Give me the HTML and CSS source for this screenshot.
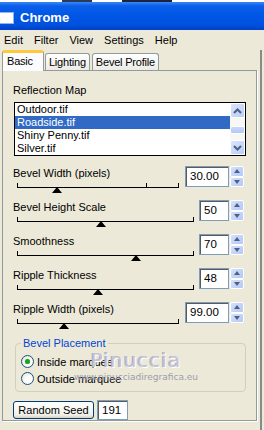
FILE: index.html
```html
<!DOCTYPE html>
<html lang="en">
<head>
  <meta charset="UTF-8" />
  <title>Chrome</title>
  <link rel="stylesheet" href="styles.css">
</head>
<body>
  <div class="topstrip"></div>
  <div class="titlebar">
    <span class="title-icon"></span>
    <span class="title-text">Chrome</span>
  </div>
  <div class="menubar">
    <span>Edit</span>
    <span>Filter</span>
    <span>View</span>
    <span>Settings</span>
    <span>Help</span>
  </div>

  <div class="frame">
    <div class="tabs">
      <span class="tab active">Basic</span>
      <span class="tab">Lighting</span>
      <span class="tab">Bevel Profile</span>
    </div>

    <div class="page">
      <div class="label">Reflection Map</div>
      <div class="listbox">
        <ul class="items">
          <li>Outdoor.tif</li>
          <li class="selected">Roadside.tif</li>
          <li>Shiny Penny.tif</li>
          <li>Silver.tif</li>
        </ul>
        <div class="scrollbar">
          <span class="sbtn">
            <svg width="9" height="6" viewBox="0 0 9 6"><path d="M1 5 L4.5 1.5 L8 5" fill="none" stroke="#4d6185" stroke-width="2"/></svg>
          </span>
          <span class="sthumb"></span>
          <span class="sbtn">
            <svg width="9" height="6" viewBox="0 0 9 6"><path d="M1 1 L4.5 4.5 L8 1" fill="none" stroke="#4d6185" stroke-width="2"/></svg>
          </span>
        </div>
      </div>

      <div class="row">
        <div class="slider-col">
          <div class="label">Bevel Width (pixels)</div>
          <div class="track wide">
            <span class="tick" style="left: 128px"></span>
            <span class="thumb" style="left: 39px"></span>
          </div>
        </div>
        <div class="field dec">30.00</div>
        <div class="spin"><span class="up"></span><span class="down"></span></div>
      </div>

      <div class="row">
        <div class="slider-col">
          <div class="label">Bevel Height Scale</div>
          <div class="track">
            <span class="thumb" style="left: 83px"></span>
          </div>
        </div>
        <div class="field">50</div>
        <div class="spin"><span class="up"></span><span class="down"></span></div>
      </div>

      <div class="row">
        <div class="slider-col">
          <div class="label">Smoothness</div>
          <div class="track">
            <span class="thumb" style="left: 118px"></span>
          </div>
        </div>
        <div class="field">70</div>
        <div class="spin"><span class="up"></span><span class="down"></span></div>
      </div>

      <div class="row">
        <div class="slider-col">
          <div class="label">Ripple Thickness</div>
          <div class="track">
            <span class="thumb" style="left: 80px"></span>
          </div>
        </div>
        <div class="field">48</div>
        <div class="spin"><span class="up"></span><span class="down"></span></div>
      </div>

      <div class="row">
        <div class="slider-col">
          <div class="label">Ripple Width (pixels)</div>
          <div class="track wide">
            <span class="thumb" style="left: 46px"></span>
          </div>
        </div>
        <div class="field dec">99.00</div>
        <div class="spin"><span class="up"></span><span class="down"></span></div>
      </div>

      <fieldset class="group">
        <legend>Bevel Placement</legend>
        <div class="radio-row"><span class="radio checked"></span>Inside marquee</div>
        <div class="radio-row"><span class="radio"></span>Outside marquee</div>
      </fieldset>

      <div class="seed-row">
        <span class="button">Random Seed</span>
        <span class="field seed">191</span>
      </div>

      <div class="watermark">
        <span class="wm-name">Pinuccia</span>
        <span class="wm-url">www.pinucciadiregrafica.eu</span>
      </div>
    </div>
  </div>
</body>
</html>
```

FILE: styles.css
```css
* {
  box-sizing: border-box;
}

body {
  margin: 0;
  width: 264px;
  height: 430px;
  overflow: hidden;
  background: #ece9d8;
  font-family: 'Liberation Sans', Arial, sans-serif;
  font-size: 11px;
  color: #000;
}

.topstrip {
  height: 2px;
  background: linear-gradient(90deg, #fff 0 62px, #2a3a5a 62px 92px, #fff 92px 122px, #1a2440 122px 172px, #fff 172px);
}

.titlebar {
  height: 28px;
  display: flex;
  align-items: center;
  gap: 6px;
  padding-top: 3px;
  background: linear-gradient(#3a88f8 0, #0a5ee9 4px, #0056e5 50%, #0052df 80%, #0040c8 100%);
  color: #fff;
}

.title-icon {
  width: 14px;
  height: 12px;
  background: #fff;
  border: 1px solid #8fb4f0;
  border-left: none;
}

.title-text {
  font-weight: bold;
  font-size: 13px;
}

.menubar {
  height: 20px;
  display: flex;
  align-items: center;
  gap: 11px;
  padding-left: 4px;
}

.frame {
  width: 262px;
  height: 380px;
  border-right: 2px solid #8a8a86;
}

.tabs {
  height: 20px;
  display: flex;
  align-items: flex-end;
  padding-left: 2px;
  position: relative;
  z-index: 1;
}

.tab {
  height: 17px;
  padding: 0 3px 0 3px;
  margin-right: 2px;
  border: 1px solid #919b9c;
  border-bottom: none;
  border-radius: 3px 3px 0 0;
  background: linear-gradient(#fff, #ecebe6);
  line-height: 16px;
  letter-spacing: -0.2px;
}

.tab.active {
  height: 21px;
  margin-bottom: -1px;
  margin-right: 1px;
  padding: 0 10px 0 4px;
  border-top: 3px solid #ffc83c;
  background: #fcfcfe;
  line-height: 17px;
}

.page {
  position: relative;
  width: 255px;
  height: 351px;
  margin-left: 2px;
  padding: 13px 12px 0 10px;
  border: 1px solid #919b9c;
  box-shadow: 1px 1px 0 #fff;
}

.label {
  line-height: 13px;
  height: 13px;
  white-space: nowrap;
}

.listbox {
  display: flex;
  width: 232px;
  height: 54px;
  margin: 5px 0 0 1px;
  border: 1px solid #000;
  background: #fff;
}

.items {
  flex: 1;
  margin: 0;
  padding: 0;
  list-style: none;
}

.items li {
  height: 13px;
  line-height: 13px;
  padding-left: 2px;
}

.items li.selected {
  background: #316ac5;
  color: #fff;
}

.scrollbar {
  width: 15px;
  display: flex;
  flex-direction: column;
  background: #f7f7f3;
}

.sbtn {
  height: 15px;
  display: flex;
  align-items: center;
  justify-content: center;
  border: 1px solid #fff;
  border-radius: 2px;
  background: linear-gradient(135deg, #dbe6fd, #b9cdf6);
}

.sthumb {
  height: 8px;
  margin: 8px 0 6px;
  border: 1px solid #fff;
  border-radius: 2px;
  background: linear-gradient(#c9d8fc, #b4c8f5);
}

.row {
  display: flex;
  align-items: flex-start;
  height: 34px;
}

.listbox + .row {
  margin-top: 10px;
}

.slider-col {
  flex: 1;
  padding-top: 1px;
}

.track {
  position: relative;
  height: 5px;
  margin: 3px 5px 0 4px;
  border: 1px solid #000;
  border-top: none;
}

.track.wide {
  margin-right: 6px;
}

.tick {
  position: absolute;
  top: 0;
  width: 1px;
  height: 4px;
  background: #000;
}

.thumb {
  position: absolute;
  top: 4px;
  width: 0;
  height: 0;
  margin-left: -5px;
  border-left: 5px solid transparent;
  border-right: 5px solid transparent;
  border-bottom: 6px solid #000;
}

.field {
  width: 30px;
  height: 21px;
  padding-left: 4px;
  border: 1px solid #7f9db9;
  box-shadow: inset 1px 1px 0 #5a5a5a;
  background: #fff;
  line-height: 19px;
  font-size: 11.5px;
}

.field.dec {
  width: 44px;
}

.spin {
  width: 14px;
  height: 21px;
  margin-left: 1px;
  display: flex;
  flex-direction: column;
}

.spin span {
  flex: 1;
  position: relative;
  border: 1px solid #fff;
  border-radius: 2px;
  background: linear-gradient(135deg, #d5e1fc, #b4c8f6);
}

.spin .up::after,
.spin .down::after {
  content: "";
  position: absolute;
  left: 3px;
  width: 0;
  height: 0;
  border-left: 3px solid transparent;
  border-right: 3px solid transparent;
}

.spin .up::after {
  top: 2px;
  border-bottom: 4px solid #4d6185;
}

.spin .down::after {
  top: 2px;
  border-top: 4px solid #4d6185;
}

.group {
  width: 231px;
  margin: 1px 0 0 2px;
  padding: 3px 4px 4px 5px;
  border: 1px solid #d0d0bf;
  border-radius: 4px;
}

.group legend {
  padding: 0 2px;
  color: #0046d5;
  line-height: 13px;
}

.radio-row {
  height: 17px;
  display: flex;
  align-items: center;
  gap: 3px;
}

.radio {
  position: relative;
  width: 13px;
  height: 13px;
  border: 1px solid #1c5180;
  border-radius: 50%;
  background: radial-gradient(circle at 60% 60%, #fff 30%, #dcd9cd);
}

.radio.checked::after {
  content: "";
  position: absolute;
  left: 3px;
  top: 3px;
  width: 5px;
  height: 5px;
  border-radius: 50%;
  background: #21a121;
  box-shadow: 0 0 1px #6ad86a;
}

.seed-row {
  display: flex;
  align-items: center;
  gap: 3px;
  margin-top: 8px;
}

.button {
  width: 81px;
  height: 18px;
  border: 1px solid #003c74;
  border-radius: 3px;
  background: linear-gradient(#fff, #f0f0ea 80%, #d6d0c5);
  text-align: center;
  line-height: 16px;
}

.field.seed {
  width: 31px;
  height: 20px;
  line-height: 18px;
}

.watermark {
  position: absolute;
  left: 72px;
  top: 278px;
  width: 122px;
  display: flex;
  flex-direction: column;
  align-items: center;
  pointer-events: none;
}

.wm-name {
  font-family: 'DejaVu Sans', sans-serif;
  font-size: 20px;
  line-height: 22px;
  letter-spacing: 1px;
  color: #c4c4d6;
  text-shadow: 1px 1px 0 #fff, -1px 0 0 #a8a8bc;
}

.wm-url {
  font-family: 'DejaVu Sans', sans-serif;
  font-size: 9px;
  line-height: 12px;
  color: #9c9cae;
}
```
